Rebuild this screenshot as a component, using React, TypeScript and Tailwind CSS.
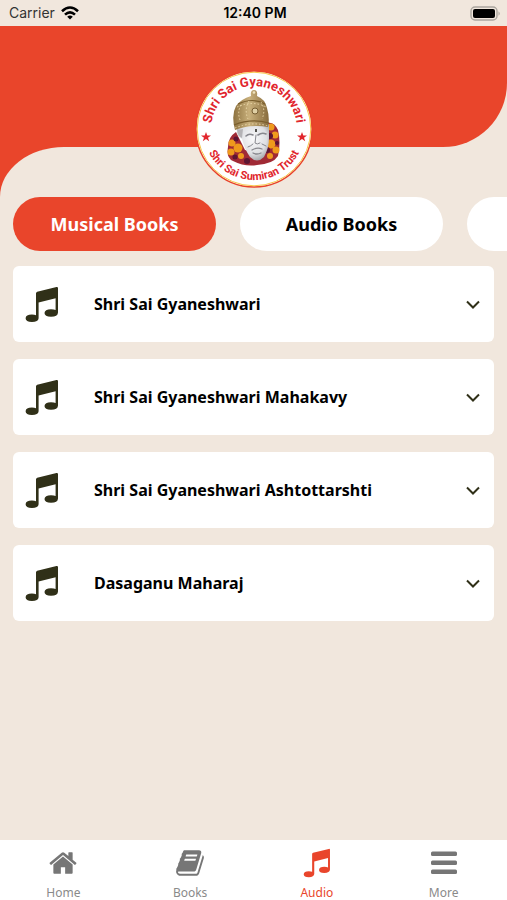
import { useState } from "react";

const tabs = ["Musical Books", "Audio Books", "Videos"];

const books = [
  "Shri Sai Gyaneshwari",
  "Shri Sai Gyaneshwari Mahakavy",
  "Shri Sai Gyaneshwari Ashtottarshti",
  "Dasaganu Maharaj",
];

function MusicIcon({ className }: { className: string }) {
  return (
    <svg viewBox="0 0 34 37" className={className} fill="currentColor">
      <path d="M11 7.500Q11 6.300 12.200 5.800L31.500 1.100Q33 .800 33 2.200V26.500Q32.800 30.800 26 30.800Q19.500 30.600 19.500 27Q19.700 23.200 26 23.200Q29 23.200 30.600 24V12.200L13.600 16.600V32.200Q13.300 36 6.900 36Q.600 35.800 .600 32.300Q.800 28.600 6.900 28.600Q9.600 28.600 11 29.300Z" />
    </svg>
  );
}

function HomeIcon({ className }: { className: string }) {
  return (
    <svg viewBox="0 0 1792 1792" className={className} fill="currentColor">
      <path d="M1472 992v480q0 26-19 45t-45 19h-384v-384h-256v384h-384q-26 0-45-19t-19-45v-480q0-1 .5-3t.5-3l575-474 575 474q1 2 1 6zm223-69l-62 74q-8 9-21 11h-3q-13 0-21-7l-692-577-692 577q-12 8-24 7-13-2-21-11l-62-74q-8-10-7-23.5t11-21.5l719-599q32-26 76-26t76 26l244 204v-195q0-14 9-23t23-9h192q14 0 23 9t9 23v408l219 182q10 8 11 21.5t-7 23.5z" />
    </svg>
  );
}

function BookIcon({ className }: { className: string }) {
  return (
    <svg viewBox="0 0 1792 1792" className={className} fill="currentColor">
      <path d="M1703 478q40 57 18 129l-275 906q-19 64-76.5 107.5t-122.5 43.5h-923q-77 0-148.5-53.5t-99.5-131.5q-24-67-2-127 0-4 3-27t4-37q1-8-3-21.5t-3-19.5q2-11 8-21t16.500-23.5 16.500-23.5q23-38 45-91.5t30-91.5q3-10 .5-30t-.5-28q3-11 17-28t17-23q21-36 42-92t25-90q1-9-2.5-32t.5-28q4-13 22-30.5t22-22.5q19-26 42.5-84.5t27.5-96.5q1-8-3-25.5t-2-26.5q2-8 9-18t18-23 17-21q8-12 16.5-30.5t15-35 16-36 19.5-32 26.5-23.5 36-11.5 47.5 5.5l-1 3q38-9 51-9h761q74 0 114 56t18 130l-274 906q-36 119-71.5 153.5t-128.5 34.5h-869q-27 0-38 15-11 16-1 43 24 70 144 70h923q29 0 56-15.5t35-41.5l300-987q7-22 5-57 38 15 59 43zm-1064 2q-4 13 2 22.5t20 9.5h608q13 0 25.5-9.5t16.5-22.5l21-64q4-13-2-22.5t-20-9.5h-608q-13 0-25.5 9.5t-16.5 22.5zm-83 256q-4 13 2 22.5t20 9.5h608q13 0 25.5-9.5t16.5-22.5l21-64q4-13-2-22.5t-20-9.5h-608q-13 0-25.5 9.5t-16.5 22.5z" />
    </svg>
  );
}

function MenuIcon({ className }: { className: string }) {
  return (
    <svg viewBox="0 0 30 30" className={className} fill="currentColor">
      <rect x="2" y="3.500" width="26" height="4.500" rx="1.500" />
      <rect x="2" y="12.500" width="26" height="4.500" rx="1.500" />
      <rect x="2" y="21.500" width="26" height="4.500" rx="1.500" />
    </svg>
  );
}

const navItems = [
  { label: "Home", Icon: HomeIcon },
  { label: "Books", Icon: BookIcon },
  { label: "Audio", Icon: MusicIcon },
  { label: "More", Icon: MenuIcon },
];

function StatusBar() {
  return (
    <div className="grid h-[26px] grid-cols-3 items-center pr-1.5 pl-[9px] font-['Inter',sans-serif] text-sm text-black">
      <div className="flex items-center gap-1.5">
        <span className="text-[#333]">Carrier</span>
        <svg viewBox="0 0 18 14" className="h-3.5 w-[18px]" fill="none" stroke="#000" strokeWidth="2.6">
          <path d="M1 5.2Q9-2.2 17 5.2" />
          <path d="M4 8.6Q9 4 14 8.6" />
          <path d="M9 13.6L6.2 10.8Q9 8.4 11.8 10.8Z" fill="#000" stroke="none" />
        </svg>
      </div>
      <span className="text-center font-semibold">12:40 PM</span>
      <svg viewBox="0 0 31 15" className="h-[15px] w-[31px] justify-self-end">
        <rect x="1" y="1" width="26" height="13" rx="4" fill="none" stroke="#aaa59e" strokeWidth="1.4" />
        <rect x="3" y="3" width="22" height="9" rx="2" fill="#000" />
        <path d="M28.5 5.2Q31 7.5 28.5 9.8Z" fill="#aaa59e" />
      </svg>
    </div>
  );
}

function Logo() {
  return (
    <svg viewBox="0 0 118 118" className="size-[118px]" role="img" aria-label="Shri Sai Gyaneshwari">
      <defs>
        <path id="arcTop" d="M16 59A43 43 0 0 1 102 59" />
        <path id="arcBottom" d="M8 59A51 51 0 0 0 110 59" />
        <radialGradient id="face" cx=".5" cy=".4" r=".65">
          <stop offset="0" stopColor="#fafafb" />
          <stop offset=".65" stopColor="#dedfe2" />
          <stop offset="1" stopColor="#9b9ca1" />
        </radialGradient>
        <linearGradient id="crown" x1="0" x2="1">
          <stop offset="0" stopColor="#8d7240" />
          <stop offset=".45" stopColor="#c9b07c" />
          <stop offset="1" stopColor="#876b3c" />
        </linearGradient>
        <filter id="soft" x="-20%" y="-20%" width="140%" height="140%">
          <feGaussianBlur stdDeviation=".7" />
        </filter>
      </defs>
      <circle cx="59" cy="59" r="58" fill="#fff" stroke="#e8432a" strokeWidth="1.5" />
      <circle cx="59" cy="59" r="56.8" fill="none" stroke="#f7c648" strokeWidth="1" />
      <g filter="url(#soft)">
        <path d="M41 62Q33 67 33 77Q31 88 38 91Q50 97 62 95Q78 94 83 86Q86 72 83 60Q79 51 72 53L66 84L50 80Z" fill="#a02a35" />
        <g fill="#ef9a1f">
          <circle cx="37" cy="73" r="3.5" />
          <circle cx="43" cy="78" r="4.5" />
          <circle cx="36" cy="82" r="3.5" />
          <circle cx="46" cy="86" r="3" />
          <circle cx="76" cy="57" r="3.5" />
          <circle cx="80" cy="65" r="3.5" />
          <circle cx="76" cy="74" r="4.5" />
          <circle cx="81" cy="80" r="3.5" />
          <circle cx="75" cy="86" r="3" />
        </g>
        <g fill="#5c1233">
          <circle cx="41" cy="69" r="2.5" />
          <circle cx="40" cy="87" r="2.5" />
          <circle cx="75" cy="66" r="3" />
          <circle cx="82" cy="73" r="2" />
          <circle cx="72" cy="80" r="3" />
          <circle cx="52" cy="91" r="3" />
        </g>
        <path d="M42 58Q41 66 47 69Q50 80 55 87Q62 94 69 87Q74 78 74 68L74 54Z" fill="url(#face)" />
        <path d="M43 60Q42 66 47 68L48 59Z" fill="#b4b3b6" />
      </g>
      <g fill="none" stroke="#88888e" strokeLinecap="round">
        <path d="M51 66Q54 63 58 65M63 65Q67 62 71 64" strokeWidth="1.6" />
        <path d="M61 65L60 73Q62 75 65 73M53 77Q56 76 58 74M67 74L71 76" />
        <path d="M57 80Q62 77 67 79M58 83Q62 85 66 83" strokeWidth="1.3" />
      </g>
      <path d="M61 59V62" stroke="#53534f" strokeWidth="2" />
      <path d="M40 60Q36 45 41 36Q46 29 56 26Q55 20 59 20Q63 20 62 26Q70 29 72 38Q75 48 73 57Q56 54 40 60Z" fill="url(#crown)" />
      <path d="M39 55Q56 48 74 53M43 34Q58 27 70 34" fill="none" stroke="#7a5e2d" strokeWidth="1.2" />
      <path d="M40 58Q57 51 73 56M42 37Q58 30 71 37M46 35Q42 42 45 50M54 31Q49 40 53 49M66 32Q71 40 67 49" fill="none" stroke="#ead7a8" strokeDasharray="1.5 2" />
      <circle cx="60" cy="41" r="3" fill="#dfcfa4" stroke="#765d32" />
      <circle cx="59" cy="22.5" r="1.3" fill="#f1e4bf" />
      <text className="font-['Roboto',sans-serif] text-[13px] font-bold" fill="#e1262d">
        <textPath href="#arcTop" startOffset="50%" textAnchor="middle">Shri Sai Gyaneshwari</textPath>
      </text>
      <text className="font-['Roboto',sans-serif] text-[11px] font-bold" fill="#e1262d">
        <textPath href="#arcBottom" startOffset="50%" textAnchor="middle">Shri Sai Sumiran Trust</textPath>
      </text>
      <path id="star" d="M11 62L12.3 65.5H16L13 67.7L14.2 71.3L11 69.1L7.8 71.3L9 67.7L6 65.5H9.7Z" fill="#e1262d" />
      <use href="#star" x="96" />
    </svg>
  );
}

export default function App() {
  const [activeTab, setActiveTab] = useState(0);
  const [openBook, setOpenBook] = useState<number | null>(null);

  return (
    <div className="flex min-h-screen flex-col overflow-hidden bg-[#f1e7dd] font-['Noto_Sans',sans-serif]">
      <StatusBar />
      <header>
        <div className="relative flex h-[121px] justify-center rounded-br-[64px] bg-[#e9452b]">
          <div className="absolute top-11">
            <Logo />
          </div>
        </div>
        <div className="h-[50px] bg-[linear-gradient(to_right,#e9452b_50%,#f1e7dd_50%)]">
          <div className="h-full rounded-tl-[64px_50px] bg-[#f1e7dd]" />
        </div>
      </header>

      <main className="flex-grow">
        <div className="flex gap-6 overflow-hidden pl-[13px]">
          {tabs.map((tab, idx) => (
            <button
              key={tab}
              onClick={() => setActiveTab(idx)}
              className={
                idx === activeTab
                  ? "h-[54px] w-[203px] shrink-0 rounded-full bg-[#e9452b] text-lg font-bold text-white"
                  : "h-[54px] w-[203px] shrink-0 rounded-full bg-white text-lg font-bold text-black"
              }
            >
              {tab}
            </button>
          ))}
        </div>
        <div className="mt-[15px] flex flex-col gap-[17px] px-[13px]">
          {books.map((book, idx) => (
            <button
              key={book}
              aria-expanded={openBook === idx}
              onClick={() => setOpenBook(openBook === idx ? null : idx)}
              className="flex h-19 items-center rounded-md bg-white px-3 text-left"
            >
              <MusicIcon className="h-[37px] w-[34px] text-[#303018]" />
              <span className="ml-[35px] flex-grow text-base font-bold text-black">{book}</span>
              <svg viewBox="0 0 18 18" className="size-[18px]" fill="none" stroke="#303018" strokeWidth="2">
                <path d="M3 6.5L9 12.5L15 6.5" />
              </svg>
            </button>
          ))}
        </div>
      </main>

      <nav className="grid h-15 grid-cols-4 bg-white">
        {navItems.map(({ label, Icon }) => (
          <a
            key={label}
            href="#"
            className={
              label === "Audio"
                ? "flex flex-col items-center gap-[7px] pt-2 text-xs text-[#e9452b]"
                : "flex flex-col items-center gap-[7px] pt-2 text-xs text-[#8a8a8a]"
            }
          >
            <Icon className={label === "Audio" ? "size-[30px]" : "size-[30px] text-[#767676]"} />
            {label}
          </a>
        ))}
      </nav>
    </div>
  );
}
